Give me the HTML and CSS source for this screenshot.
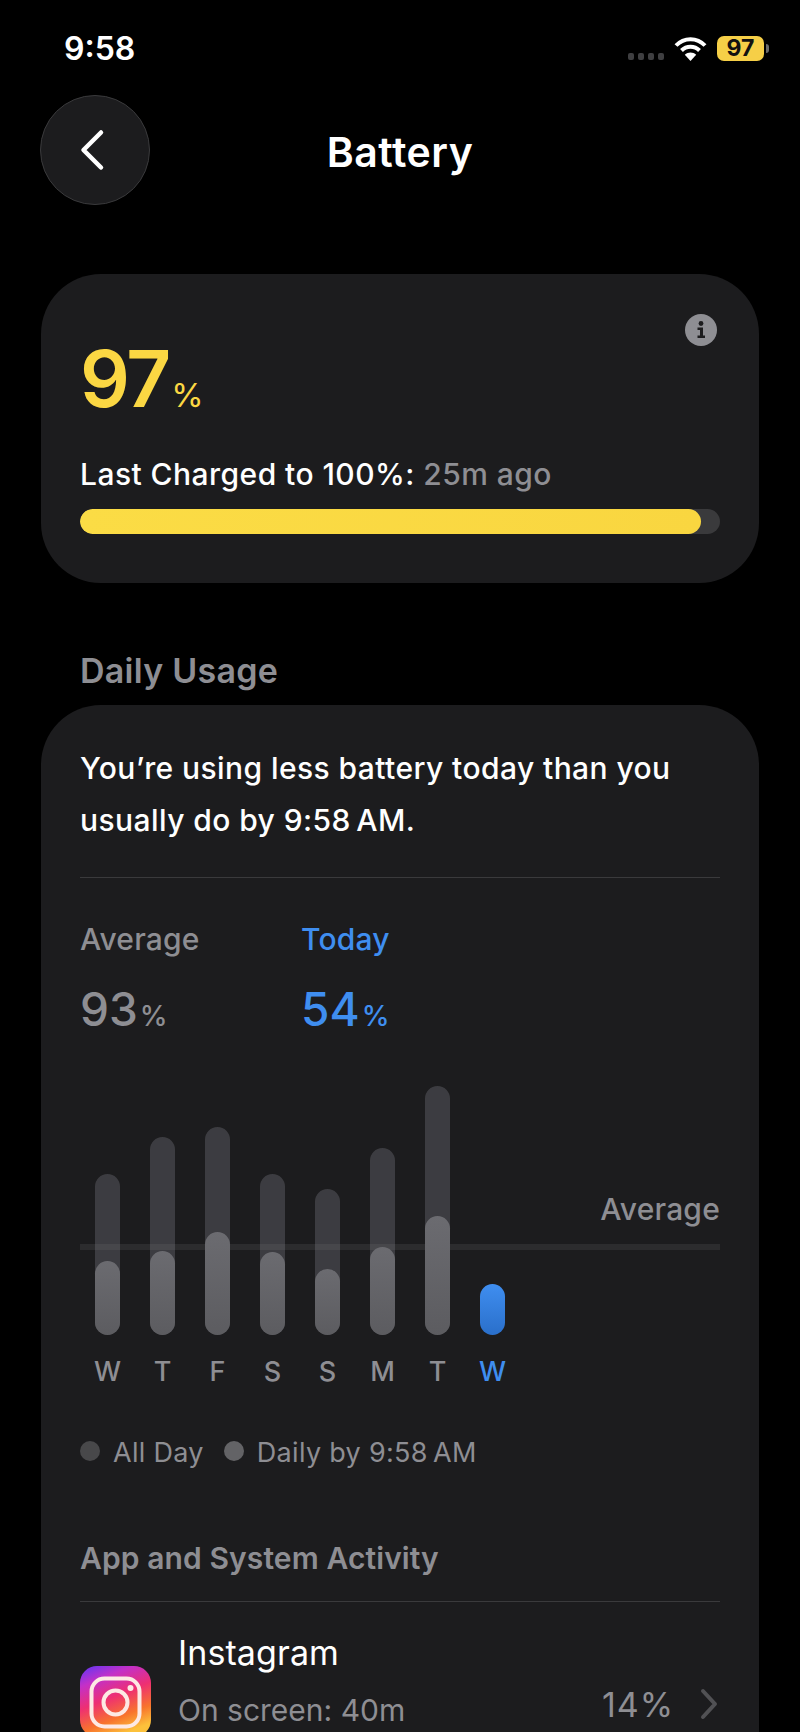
FILE: index.html
```html
<!DOCTYPE html>
<html lang="en">
<head>
<meta charset="utf-8">
<title>Battery</title>
<link rel="stylesheet" href="styles.css">
</head>
<body>
<div class="screen">
  <header class="status">
    <span class="time">9:58</span>
    <div class="status-right">
      <div class="signal"><i></i><i></i><i></i><i></i></div>
      <svg class="wifi" width="33" height="25" viewBox="0 0 33 25" fill="none" stroke="#fff" stroke-width="4" stroke-linecap="butt">
        <path d="M2 9.500C10 1 23 1 31 9.500"/>
        <path d="M7.500 14.500C12.500 9.500 20.500 9.500 25.500 14.500"/>
        <path d="M16.500 25L10.800 18.700C14 15.600 19 15.600 22.200 18.700Z" fill="#fff" stroke="none"/>
      </svg>
      <div class="batt"><span class="batt-body">97</span><span class="batt-nub"></span></div>
    </div>
  </header>

  <nav class="nav">
    <button class="back" type="button" aria-label="Back">
      <svg width="26" height="43" viewBox="0 0 26 43" fill="none" stroke="#fff" stroke-width="4.500" stroke-linecap="round" stroke-linejoin="round"><path d="M22 3.500L4.500 21L22 38.500"/></svg>
    </button>
    <h1 class="title">Battery</h1>
  </nav>

  <section class="card level">
    <svg class="info" width="32" height="32" viewBox="0 0 32 32"><circle cx="16" cy="16" r="16" fill="#8e8e93"/><circle cx="16" cy="9.500" r="2.400" fill="#1c1c1e"/><path d="M12.500 13.500H18V21.500H20V24H12.500V21.500H15V16H12.500Z" fill="#1c1c1e"/></svg>
    <div class="level-num"><span class="big">97</span><span class="pct">%</span></div>
    <p class="charged">Last Charged to 100%: <span class="muted">25m ago</span></p>
    <div class="track"><div class="fill"></div></div>
  </section>

  <h2 class="section-head">Daily Usage</h2>

  <section class="card usage">
    <p class="summary">You’re using less battery today than you usually do by 9:58&#8201;AM.</p>
    <div class="rule"></div>
    <div class="stats">
      <div class="stat avg"><div class="stat-label">Average</div><div class="stat-value">93<small>%</small></div></div>
      <div class="stat today"><div class="stat-label">Today</div><div class="stat-value">54<small>%</small></div></div>
    </div>
    <div class="chart">
      <div class="avg-line"></div>
      <div class="avg-label">Average</div>
      <div class="bars">
        <div class="col"><div class="bar" style="height:161px"><div class="bar-in" style="height:74px"></div></div><span>W</span></div>
        <div class="col"><div class="bar" style="height:198px"><div class="bar-in" style="height:84px"></div></div><span>T</span></div>
        <div class="col"><div class="bar" style="height:208px"><div class="bar-in" style="height:103px"></div></div><span>F</span></div>
        <div class="col"><div class="bar" style="height:161px"><div class="bar-in" style="height:83px"></div></div><span>S</span></div>
        <div class="col"><div class="bar" style="height:146px"><div class="bar-in" style="height:66px"></div></div><span>S</span></div>
        <div class="col"><div class="bar" style="height:187px"><div class="bar-in" style="height:88px"></div></div><span>M</span></div>
        <div class="col"><div class="bar" style="height:249px"><div class="bar-in" style="height:119px"></div></div><span>T</span></div>
        <div class="col now"><div class="bar bar-now" style="height:51px"></div><span>W</span></div>
      </div>
    </div>
    <div class="legend">
      <i class="dot dot-a"></i><span class="leg-a">All Day</span>
      <i class="dot dot-b"></i><span>Daily by 9:58&#8201;AM</span>
    </div>
    <h3 class="activity">App and System Activity</h3>
    <div class="rule rule-b"></div>
    <div class="app">
      <svg class="app-icon" width="71" height="71" viewBox="0 0 71 71" fill="none">
        <defs>
          <linearGradient id="ig" x1="0.100" y1="0" x2="0.500" y2="1">
            <stop offset="0" stop-color="#6a35f0"/>
            <stop offset="0.220" stop-color="#c330c8"/>
            <stop offset="0.500" stop-color="#ee2f72"/>
            <stop offset="0.780" stop-color="#f8742d"/>
            <stop offset="1" stop-color="#fcc13b"/>
          </linearGradient>
        </defs>
        <rect width="71" height="71" rx="17" fill="url(#ig)"/>
        <rect x="11.500" y="12.500" width="48" height="48" rx="13" stroke="#fde9e4" stroke-width="4"/>
        <circle cx="35.500" cy="36.500" r="12" stroke="#fde9e4" stroke-width="4"/>
        <circle cx="50.500" cy="22" r="3" fill="#fde9e4"/>
      </svg>
      <div class="app-text">
        <div class="app-name">Instagram</div>
        <div class="app-sub">On screen: 40m</div>
      </div>
      <div class="app-pct">14%</div>
      <svg class="chev" width="18" height="32" viewBox="0 0 18 32" fill="none" stroke="#515154" stroke-width="4" stroke-linecap="round" stroke-linejoin="round"><path d="M3 3L15 16L3 29"/></svg>
    </div>
  </section>
</div>
</body>
</html>
```
FILE: styles.css
```css
* { box-sizing: border-box; }
html, body { margin: 0; padding: 0; background: #000; }
body { font-family: Inter, "Liberation Sans", sans-serif; color: #fff; }
.screen { width: 800px; height: 1732px; overflow: hidden; padding: 0 40px; }
p, h1, h2, h3 { margin: 0; font-weight: 500; }

.status { height: 95px; display: flex; align-items: flex-start; justify-content: space-between; padding-top: 31px; }
.time { margin-left: 24px; font-size: 32px; line-height: 36px; font-weight: 600; }
.status-right { display: flex; align-items: center; margin-right: -9px; padding-top: 5px; }
.signal { display: flex; gap: 3.500px; margin-top: 15px; margin-right: 10px; }
.signal i { width: 6.500px; height: 7px; border-radius: 2px; background: #3f3f41; }
.wifi { display: block; margin-right: 10px; }
.batt { display: flex; align-items: center; }
.batt-body { width: 47px; height: 25px; border-radius: 7px; background: #f6cf47; color: #111; font-size: 23px; line-height: 25px; font-weight: 700; text-align: center; }
.batt-nub { width: 3px; height: 9px; margin-left: 2px; border-radius: 0 3px 3px 0; background: #6b6b6b; }

.nav { height: 110px; position: relative; display: flex; align-items: center; justify-content: center; }
.back { position: absolute; left: 0; top: 0; width: 110px; height: 110px; padding: 0; border-radius: 50%; border: 1.500px solid #3a3a3c; background: #1c1c1e; display: flex; align-items: center; justify-content: center; }
.back svg { display: block; margin-left: -6px; }
.title { font-size: 41px; line-height: 48px; font-weight: 600; letter-spacing: 0.5px; margin-top: 4px; }

.card { position: relative; background: #1c1c1e; border-radius: 60px; margin: 0 1px; }
.level { margin-top: 69px; height: 309px; padding: 0 39px; }
.info { position: absolute; top: 40px; right: 42px; display: block; }
.level-num { display: flex; align-items: baseline; padding-top: 60px; height: 150px; }
.big { font-size: 78px; line-height: 90px; font-weight: 600; color: #fbd743; letter-spacing: -2px; }
.pct { font-size: 33px; line-height: 40px; color: #fbd743; margin-left: 2px; }
.charged { font-size: 30px; line-height: 36px; font-weight: 500; letter-spacing: 0.45px; margin-top: 32px; }
.muted { color: #8e8e93; }
.track { margin-top: 17px; height: 25px; border-radius: 13px; background: #3a3a3c; overflow: hidden; }
.fill { width: 97%; height: 100%; border-radius: 13px; background: linear-gradient(90deg, #fbdc45, #f9d640); }

.section-head { font-size: 34px; line-height: 40px; font-weight: 600; letter-spacing: 0.25px; color: #8e8e93; margin: 68px 0 0 40px; height: 54px; }

.usage { padding: 0 39px; height: 1100px; }
.summary { padding-top: 37px; font-size: 30px; line-height: 52px; font-weight: 500; letter-spacing: 0.42px; }
.rule { height: 1px; background: #3a3a3c; margin-top: 31px; }
.stats { display: flex; margin-top: 43px; }
.stat { width: 221px; }
.stat-label { font-size: 30px; line-height: 36px; font-weight: 500; letter-spacing: 0.2px; }
.stat-value { font-size: 46px; line-height: 56px; font-weight: 500; margin-top: 24px; }
.stat-value small { font-size: 28px; font-weight: 500; margin-left: 2px; }
.avg { color: #8e8e93; }
.today { color: #3f8ef0; }

.chart { position: relative; height: 304px; margin-top: 42px; }
.avg-line { position: absolute; left: 0; right: 0; top: 158px; height: 6px; background: #2c2c2e; }
.avg-label { position: absolute; right: 0; top: 105px; font-size: 30px; line-height: 36px; font-weight: 500; letter-spacing: 0.2px; color: #8e8e93; }
.bars { position: absolute; left: 2.500px; bottom: 0; display: flex; gap: 5px; align-items: flex-end; }
.col { width: 50px; display: flex; flex-direction: column; align-items: center; }
.col span { margin-top: 19px; font-size: 27px; line-height: 36px; font-weight: 500; color: #8e8e93; }
.now span { color: #3f8ef0; }
.bar { width: 25px; border-radius: 13px; background: rgba(118,118,128,0.36); display: flex; flex-direction: column; justify-content: flex-end; position: relative; }
.bar-in { border-radius: 13px; background: linear-gradient(180deg, #6b6b70, #5c5c60); }
.bar-now { background: linear-gradient(180deg, #3f8ef0, #2a6fca); }

.legend { display: flex; align-items: center; margin-top: 45px; color: #8e8e93; font-size: 27px; line-height: 36px; letter-spacing: 0.3px; }
.dot { width: 20px; height: 20px; border-radius: 50%; margin-right: 13px; margin-top: -4px; }
.dot-a { background: #48484a; }
.dot-b { background: #636366; }
.leg-a { margin-right: 20px; }

.activity { margin-top: 69px; font-size: 30px; line-height: 36px; font-weight: 600; color: #8e8e93; letter-spacing: 0.1px; }
.rule-b { margin-top: 25px; }

.app { display: flex; align-items: flex-start; padding-top: 31px; }
.app-icon { display: block; margin-top: 33px; flex: none; }
.app-text { margin-left: 27px; flex: 1; }
.app-name { font-size: 34px; line-height: 40px; letter-spacing: 0.1px; }
.app-sub { font-size: 30px; line-height: 36px; color: #8e8e93; margin-top: 19px; }
.app-pct { font-size: 34px; line-height: 40px; color: #8e8e93; margin-top: 52px; letter-spacing: 0.9px; }
.chev { display: block; margin: 55px 2px 0 26px; flex: none; }
```
